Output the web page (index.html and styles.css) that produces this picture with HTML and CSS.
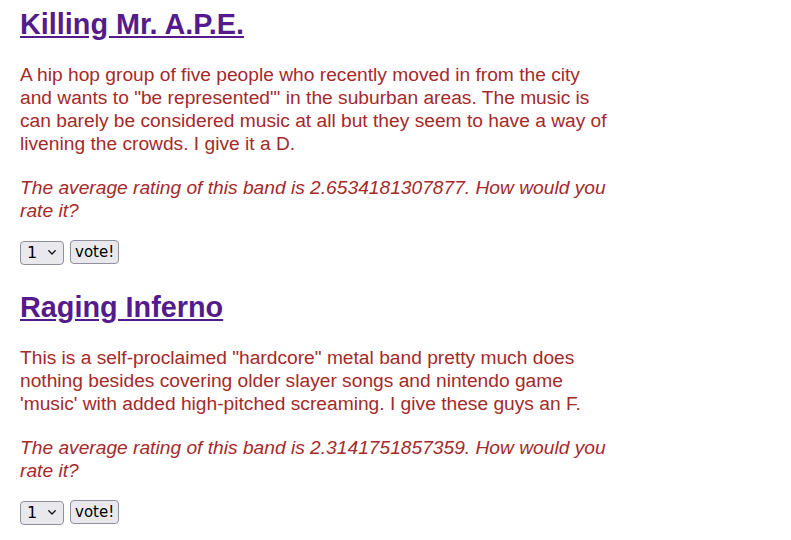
FILE: index.html
```html
<!DOCTYPE html>
<html>
<head>
<meta charset="utf-8">
<link rel="stylesheet" href="styles.css">
</head>
<body>
<div class="page">
  <div class="band">
    <h1 class="band-title"><a href="#" class="band-link">Killing Mr. A.P.E.</a></h1>
    <p class="band-desc">A hip hop group of five people who recently moved in from the city and wants to "be represented"' in the suburban areas. The music is can barely be considered music at all but they seem to have a way of livening the crowds. I give it a D.</p>
    <p class="band-rating">The average rating of this band is 2.6534181307877. How would you rate it?</p>
    <form class="vote-form">
      <span class="select-wrap">
        <select class="vote-select"><option>1</option><option>2</option><option>3</option><option>4</option><option>5</option></select>
        <svg class="chevron" width="8" height="5" viewBox="0 0 8 5"><path d="M0.8 0.8 L4 4 L7.2 0.8" fill="none" stroke="#1a1a1a" stroke-width="1.4" stroke-linecap="round" stroke-linejoin="round"/></svg>
      </span>
      <button type="button" class="vote-btn">vote!</button>
    </form>
  </div>
  <div class="band">
    <h1 class="band-title"><a href="#" class="band-link">Raging Inferno</a></h1>
    <p class="band-desc">This is a self-proclaimed "hardcore" metal band pretty much does nothing besides covering older slayer songs and nintendo game 'music' with added high-pitched screaming. I give these guys an F.</p>
    <p class="band-rating">The average rating of this band is 2.3141751857359. How would you rate it?</p>
    <form class="vote-form">
      <span class="select-wrap">
        <select class="vote-select"><option>1</option><option>2</option><option>3</option><option>4</option><option>5</option></select>
        <svg class="chevron" width="8" height="5" viewBox="0 0 8 5"><path d="M0.8 0.8 L4 4 L7.2 0.8" fill="none" stroke="#1a1a1a" stroke-width="1.4" stroke-linecap="round" stroke-linejoin="round"/></svg>
      </span>
      <button type="button" class="vote-btn">vote!</button>
    </form>
  </div>
</div>
</body>
</html>
```
FILE: styles.css
```css
html, body {
  margin: 0;
  padding: 0;
  background: #ffffff;
}
.page {
  width: 588px;
  padding: 0 20px;
  font-family: "Liberation Sans", Arial, sans-serif;
  font-size: 19.2px;
  line-height: 23px;
  color: #a52a2a;
}
.band-title {
  font-size: 28.8px;
  line-height: 32px;
  margin: 8px 0 23px;
}
.band-link {
  color: #551a8b;
}
.band-desc {
  margin: 0 0 21px;
}
.band-rating {
  font-style: italic;
  margin: 0 0 18px;
}
.vote-form {
  margin: 0 0 27px;
  display: flex;
  gap: 6px;
  align-items: center;
}
.select-wrap {
  position: relative;
  display: inline-block;
  height: 24px;
}
.vote-select {
  appearance: none;
  -webkit-appearance: none;
  box-sizing: border-box;
  width: 44px;
  height: 24px;
  margin: 0;
  padding: 0 0 0 6px;
  font-family: "DejaVu Sans", sans-serif;
  font-size: 16px;
  color: #000;
  background: #e9e9ed;
  border: 1px solid #8f8f9d;
  border-radius: 4px;
}
.chevron {
  position: absolute;
  left: 28px;
  top: 10px;
  pointer-events: none;
}
.vote-btn {
  box-sizing: border-box;
  height: 24px;
  margin: 0;
  padding: 0 4px;
  font-family: "DejaVu Sans", sans-serif;
  font-size: 15px;
  color: #000;
  background: #e9e9ed;
  border: 1px solid #8f8f9d;
  border-radius: 4px;
}
```
